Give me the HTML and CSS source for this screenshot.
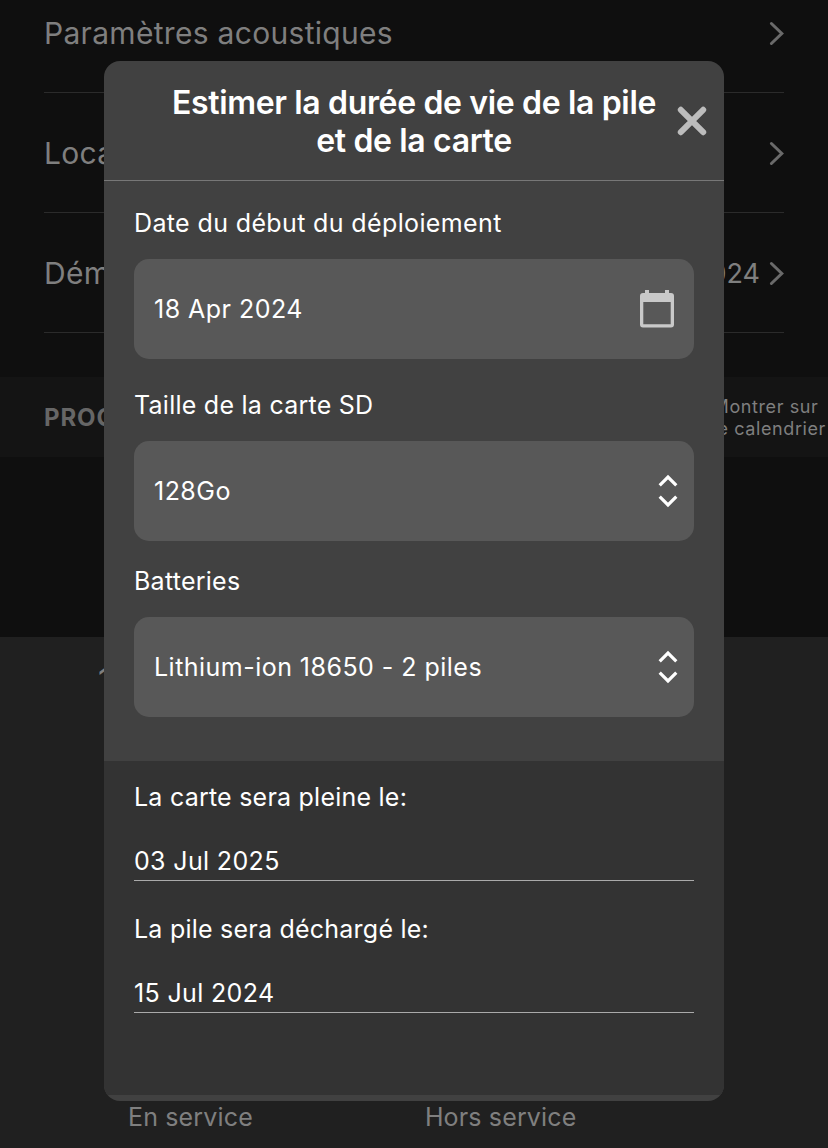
FILE: index.html
```html
<!DOCTYPE html>
<html lang="fr">
<head>
    <meta charset="UTF-8">
    <meta name="viewport" content="width=device-width, initial-scale=1.0">
    <title>Estimer la durée de vie</title>
    <link rel="stylesheet" href="styles.css">
</head>
<body>
    <div class="page">
        <div class="settings">
            <div class="setting">
                <span class="setting-name">Paramètres acoustiques</span>
                <svg class="arrow" width="16" height="26" viewBox="0 0 16 26"><path d="M3.4 3.5L13.8 13.5L3.4 23.5"/></svg>
            </div>
            <div class="setting">
                <span class="setting-name">Local</span>
                <svg class="arrow" width="16" height="26" viewBox="0 0 16 26"><path d="M3.4 3.5L13.8 13.5L3.4 23.5"/></svg>
            </div>
            <div class="setting">
                <span class="setting-name">Démarrage</span>
                <span class="setting-value">2024</span>
                <svg class="arrow" width="16" height="26" viewBox="0 0 16 26"><path d="M3.4 3.5L13.8 13.5L3.4 23.5"/></svg>
            </div>
        </div>

        <div class="section-bar">
            <span class="section-title">PROG.</span>
            <span class="section-link">Montrer sur<br>le calendrier</span>
        </div>

        <div class="schedule"></div>

        <div class="status">
            <div class="status-value">1</div>
            <div class="status-labels">
                <span>En service</span>
                <span>Hors service</span>
            </div>
        </div>
    </div>

    <div class="modal">
        <div class="modal-header">
            <h1>Estimer la durée de vie de la pile et de la carte</h1>
            <button class="close" aria-label="Fermer">
                <svg width="30" height="30" viewBox="0 0 30 30"><path d="M3.8 3.8L26.2 26.2M26.2 3.8L3.8 26.2"/></svg>
            </button>
        </div>

        <div class="form">
            <div class="label label-date">Date du début du déploiement</div>
            <div class="field field-date">
                <span>18 Apr 2024</span>
                <svg width="34" height="38" viewBox="0 0 34 38"><path fill="#c9c9c9" fill-rule="evenodd" d="M5 0H9V3H25V0H29V3H31Q34 3 34 6V34.5Q34 37.5 31 37.5H3Q0 37.5 0 34.5V6Q0 3 3 3H5ZM3.3 12V34.2H30.7V12Z"/></svg>
            </div>
            <div class="label">Taille de la carte SD</div>
            <div class="field">
                <span>128Go</span>
                <svg class="sort" width="20" height="34" viewBox="0 0 20 34"><path d="M1.7 11.3L10 3L18.3 11.3M1.7 22.7L10 31L18.3 22.7"/></svg>
            </div>
            <div class="label">Batteries</div>
            <div class="field">
                <span>Lithium-ion 18650 - 2 piles</span>
                <svg class="sort" width="20" height="34" viewBox="0 0 20 34"><path d="M1.7 11.3L10 3L18.3 11.3M1.7 22.7L10 31L18.3 22.7"/></svg>
            </div>
        </div>

        <div class="results">
            <div class="result">
                <div class="result-label">La carte sera pleine le:</div>
                <div class="result-value">03 Jul 2025</div>
            </div>
            <div class="result">
                <div class="result-label">La pile sera déchargé le:</div>
                <div class="result-value">15 Jul 2024</div>
            </div>
        </div>
    </div>
</body>
</html>
```
FILE: styles.css
```css
* {
    box-sizing: border-box;
}

body {
    font-family: Inter, "Liberation Sans", sans-serif;
    background-color: #0f0f0f;
    color: #fff;
    margin: 0;
    height: 1148px;
    overflow: hidden;
}

.page {
    display: flex;
    flex-direction: column;
    height: 1148px;
    overflow: hidden;
    color: #7f7f7f;
}

.settings {
    margin-top: -27px;
    padding: 0 44px;
}

.setting {
    display: flex;
    align-items: center;
    height: 120px;
    border-bottom: 1px solid #2b2b2b;
}

.setting-name {
    flex: 1;
    font-size: 30px;
    letter-spacing: 0.3px;
}

.setting-value {
    padding-top: 2px;
    font-size: 27px;
    margin-right: 8px;
}

.arrow path {
    fill: none;
    stroke: #6a6a6a;
    stroke-width: 3;
    stroke-linecap: round;
}

.section-bar {
    display: flex;
    justify-content: space-between;
    align-items: center;
    height: 80px;
    margin-top: 44px;
    padding: 0 2px 0 44px;
    background-color: #141414;
}

.section-title {
    font-size: 24px;
    font-weight: 700;
    letter-spacing: 0.9px;
    color: #666;
}

.section-link {
    padding-top: 2px;
    font-size: 18px;
    line-height: 22px;
    letter-spacing: 0.6px;
}

.schedule {
    height: 180px;
}

.status {
    display: flex;
    flex-direction: column;
    justify-content: space-between;
    flex: 1;
    padding: 19px 0 15px 98px;
    background-color: #202020;
}

.status-value {
    font-size: 32px;
    line-height: 50px;
}

.status-labels {
    display: flex;
    gap: 172px;
    padding-left: 30px;
    font-size: 25px;
    line-height: 32px;
    letter-spacing: 0.15px;
}

.modal {
    position: absolute;
    top: 61px;
    left: 104px;
    width: 620px;
    height: 1040px;
    padding-bottom: 6px;
    display: flex;
    flex-direction: column;
    background-color: #414141;
    border-radius: 16px;
    overflow: hidden;
    font-size: 25px;
    letter-spacing: 0.25px;
}

.modal-header {
    display: flex;
    justify-content: flex-end;
    align-items: center;
    height: 120px;
    padding: 0 17px 0 60px;
    border-bottom: 1px solid #777;
}

h1 {
    flex: 1;
    margin: 0;
    padding-top: 3px;
    font-size: 32px;
    line-height: 38px;
    font-weight: 600;
    letter-spacing: -0.35px;
    text-align: center;
}

.close {
    display: flex;
    margin-left: 13px;
    padding: 0;
    border: none;
    background: none;
    cursor: pointer;
}

.close path {
    fill: none;
    stroke: #bcbcbc;
    stroke-width: 6;
    stroke-linecap: round;
}

.form {
    height: 580px;
    padding: 6px 30px 0;
}

.label {
    line-height: 72px;
}

.label-date {
    letter-spacing: 0.37px;
}

.field {
    display: flex;
    justify-content: space-between;
    align-items: center;
    height: 100px;
    margin-bottom: 4px;
    padding: 0 16px 0 20px;
    border-radius: 15px;
    background-color: #585858;
    letter-spacing: 0.47px;
}

.field-date {
    margin-bottom: 10px;
    padding-right: 20px;
}

.sort path {
    fill: none;
    stroke: #fff;
    stroke-width: 3.2;
}

.results {
    flex: 1;
    padding: 20px 30px 0;
    background-color: #333;
    letter-spacing: 0.23px;
}

.result {
    margin-bottom: 32px;
    line-height: 32px;
}

.result-value {
    margin-top: 32px;
    height: 36px;
    border-bottom: 1px solid #aaa;
    letter-spacing: 0.35px;
}
```
